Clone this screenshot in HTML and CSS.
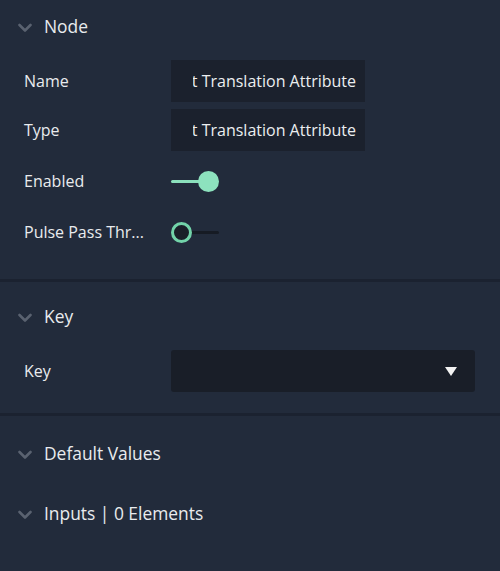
FILE: index.html
```html
<!DOCTYPE html>
<html>
<head>
<meta charset="utf-8">
<link rel="stylesheet" href="styles.css">
</head>
<body>
<div class="panel">
  <section class="section section-node">
    <div class="header">
      <svg class="chev" width="14" height="10" viewBox="0 0 14 10"><path d="M1.5 2 L7 7.5 L12.5 2" fill="none" stroke="#5d6573" stroke-width="2.6" stroke-linecap="round" stroke-linejoin="round"/></svg>
      <span class="title">Node</span>
    </div>
    <div class="row">
      <span class="label">Name</span>
      <div class="field"><div class="clip"><span>Set Translation Attribute</span></div></div>
    </div>
    <div class="row">
      <span class="label">Type</span>
      <div class="field"><div class="clip"><span>Set Translation Attribute</span></div></div>
    </div>
    <div class="row row-toggle">
      <span class="label">Enabled</span>
      <div class="toggle on"><div class="track"></div><div class="thumb"></div></div>
    </div>
    <div class="row row-toggle">
      <span class="label">Pulse Pass Thr...</span>
      <div class="toggle off"><div class="track"></div><div class="thumb"></div></div>
    </div>
  </section>
  <section class="section section-key">
    <div class="header">
      <svg class="chev" width="14" height="10" viewBox="0 0 14 10"><path d="M1.5 2 L7 7.5 L12.5 2" fill="none" stroke="#5d6573" stroke-width="2.6" stroke-linecap="round" stroke-linejoin="round"/></svg>
      <span class="title">Key</span>
    </div>
    <div class="row">
      <span class="label">Key</span>
      <div class="select"><svg class="tri" width="12" height="9" viewBox="0 0 12 9"><path d="M0 0 H12 L6 9 Z" fill="#f2f2f2"/></svg></div>
    </div>
  </section>
  <section class="section section-rest">
    <div class="header">
      <svg class="chev" width="14" height="10" viewBox="0 0 14 10"><path d="M1.5 2 L7 7.5 L12.5 2" fill="none" stroke="#5d6573" stroke-width="2.6" stroke-linecap="round" stroke-linejoin="round"/></svg>
      <span class="title">Default Values</span>
    </div>
    <div class="header header-second">
      <svg class="chev" width="14" height="10" viewBox="0 0 14 10"><path d="M1.5 2 L7 7.5 L12.5 2" fill="none" stroke="#5d6573" stroke-width="2.6" stroke-linecap="round" stroke-linejoin="round"/></svg>
      <span class="title">Inputs | 0 Elements</span>
    </div>
  </section>
</div>
</body>
</html>
```
FILE: styles.css
```css
html, body {
  margin: 0;
  padding: 0;
  background: #222b3b;
}
body {
  width: 500px;
  height: 571px;
  overflow: hidden;
  font-family: "Open Sans", "DejaVu Sans", sans-serif;
  color: #e9ebee;
}
.panel {
  display: flex;
  flex-direction: column;
}
.section {
  display: flex;
  flex-direction: column;
}
.section-node {
  padding-bottom: 26px;
  border-bottom: 3px solid #1b2230;
}
.section-key {
  padding-top: 8px;
  padding-bottom: 21px;
  border-bottom: 3px solid #1b2230;
}
.section-rest {
  padding-top: 11px;
}
.header {
  height: 52px;
  display: flex;
  align-items: center;
  padding-left: 18px;
  flex-shrink: 0;
}
.header-second {
  margin-top: 8px;
}
.chev {
  margin-top: 4px;
  margin-right: 12px;
  opacity: 0.95;
}
.title {
  font-size: 17.4px;
  line-height: 20px;
}
.row {
  height: 42px;
  display: flex;
  align-items: center;
  margin-top: 7px;
  padding-left: 24px;
}
.section .header + .row {
  margin-top: 8px;
}
.row-toggle {
  margin-top: 9px;
}
.label {
  width: 147px;
  flex-shrink: 0;
  font-size: 16px;
  line-height: 20px;
  white-space: nowrap;
}
.field {
  width: 194px;
  height: 42px;
  box-sizing: border-box;
  background: #1b212d;
  padding: 0 9px 0 22px;
  display: flex;
  align-items: center;
}
.clip {
  flex: 1;
  overflow: hidden;
  display: flex;
  justify-content: flex-end;
  white-space: nowrap;
  font-size: 16px;
  line-height: 20px;
  color: #eceef0;
}
.clip span {
  flex-shrink: 0;
}
.toggle {
  position: relative;
  width: 48px;
  height: 21px;
}
.toggle .track {
  position: absolute;
  left: 0;
  right: 0;
  top: 9px;
  height: 3px;
  border-radius: 2px;
}
.toggle.on .track {
  background: #8be0bc;
  right: 10px;
}
.toggle.off .track {
  background: #161b24;
  left: 10px;
}
.toggle .thumb {
  position: absolute;
  top: 0;
  width: 21px;
  height: 21px;
  border-radius: 50%;
  box-sizing: border-box;
}
.toggle.on .thumb {
  right: 0;
  background: #8de2be;
}
.toggle.off .thumb {
  left: 0;
  background: #1a1f28;
  border: 3px solid #72d3a9;
}
.select {
  width: 304px;
  height: 42px;
  box-sizing: border-box;
  background: #191e28;
  border-radius: 3px;
  display: flex;
  align-items: center;
  justify-content: flex-end;
  padding-right: 18px;
}
.tri {
  display: block;
}
```
